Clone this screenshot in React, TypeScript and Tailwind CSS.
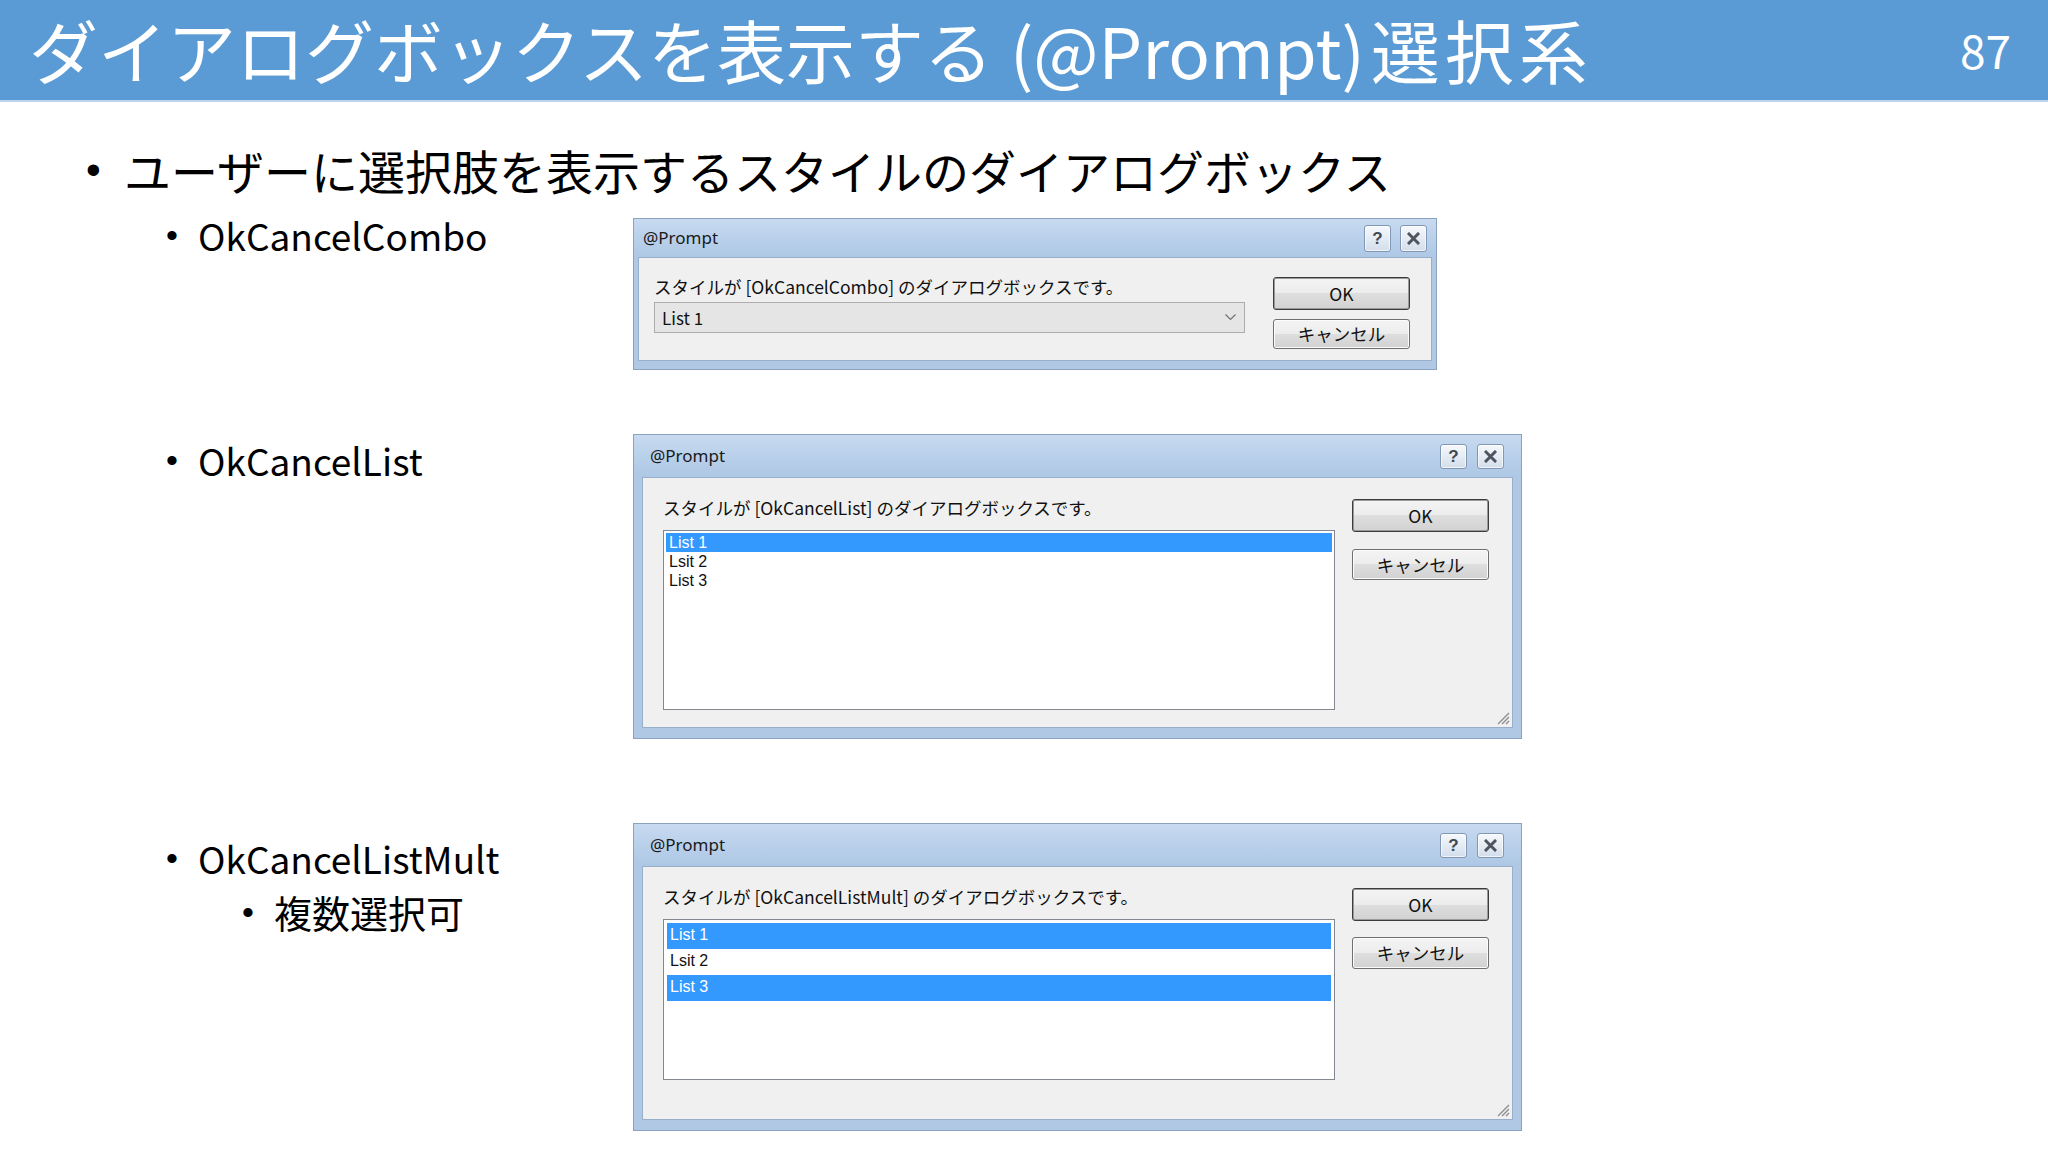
import React from "react";

const JP = "font-['Noto_Sans_CJK_JP','Noto_Sans',sans-serif]";

function CapButtons({ btn, gap }: { btn: string; gap: string }) {
  return (
    <div className={`flex items-center ${gap}`}>
      <div
        className={`${btn} flex items-center justify-center rounded-[3px] border border-[#8197b3] bg-gradient-to-b from-[#f6f9fc] to-[#d3deeb] shadow-[inset_0_0_0_1px_#ffffffaa]`}
      >
        <span className="font-['Liberation_Sans',sans-serif] text-[17px] font-bold leading-none text-[#404852]">?</span>
      </div>
      <div
        className={`${btn} flex items-center justify-center rounded-[3px] border border-[#8197b3] bg-gradient-to-b from-[#f6f9fc] to-[#d3deeb] shadow-[inset_0_0_0_1px_#ffffffaa]`}
      >
        <svg width="13" height="13" viewBox="0 0 13 13">
          <path d="M2 2 L11 11 M11 2 L2 11" stroke="#4e5560" strokeWidth="3" strokeLinecap="square" />
        </svg>
      </div>
    </div>
  );
}

function WinButton({ label, def, h }: { label: string; def?: boolean; h: string }) {
  return (
    <div
      className={`${h} w-[137px] flex items-center justify-center rounded-[3px] border ${
        def ? "border-[#3c3c3c] shadow-[inset_0_0_0_1px_#9a9a9a]" : "border-[#707070] shadow-[inset_0_0_0_1px_#fbfbfb]"
      } bg-[linear-gradient(#f4f4f4,#ececec_50%,#dedede_50%,#d2d2d2)] text-[17.5px] leading-none text-[#111]`}
    >
      {label}
    </div>
  );
}

function Grip() {
  return (
    <svg className="absolute right-[2px] bottom-[2px]" width="14" height="14" viewBox="0 0 14 14">
      <path d="M13 2 L2 13 M13 6 L6 13 M13 10 L10 13" stroke="#8e8e8e" strokeWidth="1.4" />
    </svg>
  );
}

function Dialog1() {
  return (
    <div className={`w-[804px] border border-[#8ba3c1] bg-[#b0c8e4] flex flex-col ${JP}`}>
      <div className="h-[38px] flex items-center justify-between pl-[9px] pr-[9px] bg-gradient-to-b from-[#c7daf0] to-[#adc7e5]">
        <span className="font-['Noto_Sans',sans-serif] text-[17px] text-[#1a1a1a]">@Prompt</span>
        <CapButtons btn="w-[27px] h-[27px]" gap="gap-[9px]" />
      </div>
      <div className="px-[4px] pb-[8px]">
        <div className="h-[104px] bg-[#f0f0f0] border border-[#98afcb] flex pl-[15px] pr-[21px] pt-[19px] gap-[28px]">
          <div className="flex-1 flex flex-col">
            <div className="h-[20px] leading-[20px] text-[17.5px] text-[#111] whitespace-nowrap">
              スタイルが [OkCancelCombo] のダイアログボックスです。
            </div>
            <div className="mt-[5px] h-[31px] border border-[#adadad] bg-[#e5e5e5] flex items-center justify-between pl-[7px] pr-[8px]">
              <span className="text-[17px] leading-none text-[#111]">List 1</span>
              <svg width="11" height="7" viewBox="0 0 11 7">
                <polyline points="0.5,0.5 5.5,5.5 10.5,0.5" fill="none" stroke="#707070" strokeWidth="1.2" />
              </svg>
            </div>
          </div>
          <div className="w-[137px] flex flex-col gap-[9px]">
            <WinButton label="OK" def h="h-[33px]" />
            <WinButton label="キャンセル" h="h-[30px]" />
          </div>
        </div>
      </div>
    </div>
  );
}

function ListDialog({ kind }: { kind: "single" | "multi" }) {
  const multi = kind === "multi";
  const rows = [
    { t: "List 1", sel: true },
    { t: "Lsit 2", sel: false },
    { t: "List 3", sel: multi },
  ];
  return (
    <div className={`w-[889px] border border-[#8ba3c1] bg-[#b0c8e4] flex flex-col ${JP}`}>
      <div className="h-[42px] flex items-center justify-between pl-[16px] pr-[17px] bg-gradient-to-b from-[#c7daf0] to-[#adc7e5]">
        <span className="font-['Noto_Sans',sans-serif] text-[17px] text-[#1a1a1a]">@Prompt</span>
        <CapButtons btn="w-[27px] h-[25px]" gap="gap-[10px]" />
      </div>
      <div className="px-[8px] pb-[10px]">
        <div
          className={`relative ${multi ? "h-[254px]" : "h-[251px]"} bg-[#f0f0f0] border border-[#98afcb] flex pl-[20px] pr-[23px] pt-[20px] gap-[17px]`}
        >
          <div className="flex-1 flex flex-col">
            <div className="h-[20px] leading-[20px] text-[17.5px] text-[#111] whitespace-nowrap">
              {multi
                ? "スタイルが [OkCancelListMult] のダイアログボックスです。"
                : "スタイルが [OkCancelList] のダイアログボックスです。"}
            </div>
            <div
              className={`${multi ? "mt-[12px] h-[161px] p-[3px]" : "mt-[12px] h-[180px] p-[2px]"} border border-[#828790] bg-white flex flex-col`}
            >
              {rows.map((r) => (
                <div
                  key={r.t}
                  className={`${multi ? "h-[26px] leading-[24px]" : "h-[19px] leading-[19px]"} pl-[3px] font-['Liberation_Sans',sans-serif] text-[16px] ${
                    r.sel ? "bg-[#3399ff] text-white" : "text-[#111]"
                  }`}
                >
                  {r.t}
                </div>
              ))}
            </div>
          </div>
          <div className="w-[137px] flex flex-col pt-[1px]">
            <WinButton label="OK" def h="h-[33px]" />
            <div className={multi ? "h-[16px]" : "h-[17px]"} />
            <WinButton label="キャンセル" h={multi ? "h-[32px]" : "h-[31px]"} />
          </div>
          <Grip />
        </div>
      </div>
    </div>
  );
}

function Label({ text, sub }: { text: string; sub?: boolean }) {
  return (
    <div className={`flex items-center ${sub ? "pl-[76px] h-[46px]" : "h-[46px]"}`}>
      <span className="w-[32px] font-['Liberation_Sans',sans-serif] text-[34px] leading-none text-black">•</span>
      <span className={`${JP} ${sub ? "text-[38px]" : "text-[37px]"} leading-[46px] text-black whitespace-nowrap`}>{text}</span>
    </div>
  );
}

export default function App() {
  return (
    <div className="w-[2048px] h-[1152px] bg-white overflow-hidden">
      <header className="h-[102px] bg-[#5b9bd5] border-b-2 border-[#bcd6ef] flex items-center justify-between pl-[29px] pr-[37px]">
        <h1 className={`${JP} text-white text-[69px] leading-[1.3] whitespace-nowrap`}>
          ダイアログボックスを表示する<span className="ml-[17px] mr-[6px]">(@Prompt)</span>
          <span className="tracking-[5px]">選択系</span>
        </h1>
        <span className={`${JP} text-white text-[46px] leading-[1.3]`}>87</span>
      </header>

      <div className="pl-[86px] mt-[40px] flex items-center h-[56px]">
        <span className="w-[38px] font-['Liberation_Sans',sans-serif] text-[42px] leading-none text-black">•</span>
        <span className={`${JP} text-[47px] leading-[56px] text-black whitespace-nowrap`}>
          ユーザーに選択肢を表示するスタイルのダイアログボックス
        </span>
      </div>

      <div className="pl-[166px] flex flex-col">
        <div className="mt-[14px] flex">
          <div className="w-[467px]">
            <Label text="OkCancelCombo" />
          </div>
          <div className="mt-[6px]">
            <Dialog1 />
          </div>
        </div>

        <div className="mt-[64px] flex">
          <div className="w-[467px] pt-[3px]">
            <Label text="OkCancelList" />
          </div>
          <ListDialog kind="single" />
        </div>

        <div className="mt-[84px] flex">
          <div className="w-[467px] pt-[12px] flex flex-col gap-[8px]">
            <Label text="OkCancelListMult" />
            <Label text="複数選択可" sub />
          </div>
          <ListDialog kind="multi" />
        </div>
      </div>
    </div>
  );
}
